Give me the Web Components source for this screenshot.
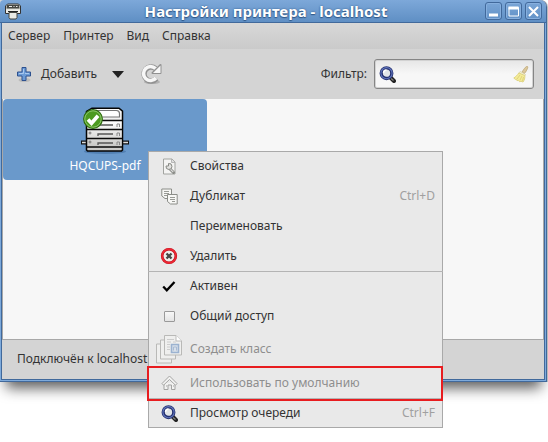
<!DOCTYPE html>
<html lang="ru">
<head>
<meta charset="utf-8">
<title>Настройки принтера - localhost</title>
<style>
  body { margin: 0; min-height: 100vh; background: #fff; font: 12px/16px "Noto Sans", sans-serif; color: #333; overflow: hidden; position: relative; }
  app-window { height: calc(100vh - 60px); margin-right: 1px; }
  context-menu { position: absolute; left: 148px; top: 151px; }
</style>
</head>
<body>
<app-window>
  <title-bar slot="title">Настройки принтера - localhost</title-bar>
  <menu-strip slot="menu"></menu-strip>
  <tool-strip slot="tools"></tool-strip>
  <printer-tile>HQCUPS-pdf</printer-tile>
  <span slot="status">Подключён к localhost</span>
</app-window>
<context-menu>
  <menu-entry icon="props">Свойства</menu-entry>
  <menu-entry icon="copy" accel="Ctrl+D">Дубликат</menu-entry>
  <menu-entry>Переименовать</menu-entry>
  <menu-entry icon="remove">Удалить</menu-entry>
  <menu-check ruled checked>Активен</menu-check>
  <menu-check>Общий доступ</menu-check>
  <menu-entry class="tall" icon="group" disabled>Создать класс</menu-entry>
  <menu-entry class="marked" icon="home" disabled>Использовать по умолчанию</menu-entry>
  <menu-entry ruled icon="find" accel="Ctrl+F">Просмотр очереди</menu-entry>
</context-menu>
<script>
const icons = {
  printer: [18, 17, `<path d="M1.500 3l2-2h11l2 2v7.500h-15z" fill="#d6d7cf" stroke="#333"/><path d="M3 2h12l.5 3.500h-13z" fill="#454743"/><path d="M5 3.500h3M9.500 3.500h1M12 3.500h1.500" stroke="#eee"/><path d="M2 6.500h14v3.500H2z" fill="#efefea"/><path d="M4 8.500h10" stroke="#222"/><path d="M5 9.500h8v5l-1 1.500H6l-1-1.500z" fill="#e9eae5" stroke="#454743"/>`],
  plus: [16, 17, `<ellipse cx="8.500" cy="14" rx="6" ry="2" fill="#aaa" opacity=".6"/><path d="M6 1.500h4v4.500h4.500v4H10v4.500H6V10H1.500V6H6z" fill="#6c9bd6" stroke="#2d518f" stroke-linejoin="round"/><path d="M7.500 3v4.500H3M9 7.500h4" stroke="#a8c8ef" fill="none"/>`],
  refresh: [22, 22, `<ellipse cx="11" cy="19" rx="8" ry="2" fill="#999" opacity=".6"/><path d="M14.500 5.600A7 7 0 1 0 15.400 15.500" fill="none" stroke="#919191" stroke-width="5.400"/><path d="M19.500 2v8h-8z" fill="#919191" stroke="#919191" stroke-width="2" stroke-linejoin="round"/><path d="M14.500 5.600A7 7 0 1 0 14.900 15" fill="none" stroke="#f7f7f7" stroke-width="3.600"/><path d="M19.500 2.500v7.500h-7.500z" fill="#f7f7f7"/>`],
  find: [17, 17, `<path d="M11 11l4 4" stroke="#222" stroke-width="4" stroke-linecap="round"/><path d="M12 12.500l2.500 2" stroke="#888" stroke-width="1.200"/><circle cx="7.500" cy="7.200" r="5.300" fill="#e2e5e8" stroke="#24306f" stroke-width="3.300"/><circle cx="7.500" cy="7.200" r="5.600" fill="none" stroke="#6276bd" stroke-width="1.100"/><path d="M4.500 7a3 3 0 0 1 3-3" fill="none" stroke="#fff" stroke-width="1.500"/>`],
  broom: [16, 17, `<path d="M14.500.5c-1-.7-3 1.500-5.500 5.500l2.500 1.500c3-4 3.700-6.300 3-7z" fill="#dcc89b" stroke="#bda779" stroke-width=".8"/><path d="M7 5.500l5.500 3-.8 1.500-5.700-3z" fill="#f6f4df" stroke="#d5cf9e" stroke-width=".7"/><path d="M5.800 7C4.500 9 2.500 11 .8 12l1.700 1.500 1-.3.500 1.500 1.500-.5 1 1.500 1.500-.5 2 .8c1.500-2 2-4 1.800-6.500z" fill="#f5ec98" stroke="#dfd483"/><path d="M7 9l-3 4M9 10l-2 4M10.500 11l-1 4" stroke="#d8cb71" stroke-width=".8"/>`],
  props: [16, 17, `<path d="M2.500 1h8.500l3 3v12H2.500z" fill="#f4f4f3" stroke="#a2a4a0"/><path d="M10.500 1v3.500H14" fill="#ddd" stroke="#aaa" stroke-width=".8"/><path d="M8.300 10.300l4.200 4.200" stroke="#888a85" stroke-width="3" stroke-linecap="round"/><path d="M8.600 10.500l3.700 3.700" stroke="#ddd" stroke-width="1.200"/><path d="M7.500 5.500v2.500h-2.500a3 3 0 1 0 2.500-2.500z" fill="#e2e2e0" stroke="#888a85"/>`],
  copy: [17, 17, `<g fill="#f7f7f5" stroke="#8b8d88"><path d="M.8 1h9.700v9.500H4L.8 8z"/><path d="M6.500 6.500h9.700V16H9.500l-3-2.500z"/></g><path d="M3 3.500h5M3 5.500h5M3 7.500h3M9 9.500h5M9 11.500h5M11 13.500h3" stroke="#999b96"/>`],
  remove: [18, 18, `<circle cx="9" cy="9" r="6.800" fill="#eeeeec" stroke="#b80d18" stroke-width="2.600"/><circle cx="9" cy="9" r="6.900" fill="none" stroke="#ed2734" stroke-width="1.600"/><path d="M6.500 6.500l5 5m0-5l-5 5" stroke="#454745" stroke-width="2.300"/>`],
  tick: [14, 12, `<path d="M1.200 6.500l3.600 3.800L12.500 2" fill="none" stroke="#000" stroke-width="2.300"/>`],
  group: [26, 30, `<g fill="#efefee" stroke="#b9b9b7"><path d="M.5 10h15v19h-15z"/><path d="M4.500 6h15v19h-15z"/><path d="M8.500 1.500H20L25.500 7v14h-17z"/></g><path d="M20 1.500V7h5.500" fill="#fff" stroke="#bbb"/><path d="M11 5.500h7M11 8h4M17 8h3M11 10.500h3M11 13h3M11 15.500h3" stroke="#ccc"/><path d="M15.500 10.500h7v8h-7z" fill="#d8e0ea" stroke="#9bb2d0" stroke-width="1.600"/><path d="M17.500 16.500v-3.500h3v3.500" fill="none" stroke="#a9bbd3"/>`],
  home: [17, 16, `<path d="M3 8v6.500h4V10h3.500v4.500h3.500V8" fill="#f2f2f1" stroke="#a4a4a3"/><path d="M8.500 1L1 8.500l1.500 1.700 6-5.700 6 5.700L16 8.500z" fill="#f3f3f2" stroke="#a4a4a3" stroke-linejoin="round"/><path d="M5 11h1M12 11h1" stroke="#a4a4a3"/>`],
  server: [50, 48, `<defs><linearGradient id="m" x2="0" y2="1"><stop stop-color="#fff"/><stop offset="1" stop-color="#c9c9c7"/></linearGradient></defs><ellipse cx="25" cy="44.500" rx="21" ry="2.500" fill="#234f83" opacity=".35"/><path d="M1 35.500h48" stroke="#111" stroke-width="4"/><path d="M2 35.500h46" stroke="#ddd" stroke-width="1.500"/><path d="M12 1.200h27l3.500 3V43l-1 1H7.500l-1-1V4.500z" fill="url(#m)" stroke="#050505" stroke-width="1.500"/><path d="M10 3.500h26.500q3 .3 3 3v3.500H14" fill="#fff" stroke="#777" stroke-width="1.200"/><path d="M8 14h33.500v8H8zM8 23h33.500v8H8zM8 32h33.500v7H8z" fill="url(#m)"/><path d="M6.500 13.500h36M6.500 22.500h36M6.500 31.500h36M6.500 40h36" stroke="#090909" stroke-width="1.500"/><path d="M18 20v-2h15M18 29v-2h15M18 38v-2h15" fill="none" stroke="#555" stroke-width="1.300"/><path d="M37 20v-3h2.500v3M37 29v-3h2.500v3M37 38v-3h2.500v3" fill="none" stroke="#888"/><circle cx="10" cy="26" r="1" fill="none" stroke="#777"/><circle cx="10" cy="35" r="1" fill="none" stroke="#777"/><circle cx="13" cy="12" r="9.300" fill="#4c9a20" stroke="#2b6a0c" stroke-width="1.200"/><circle cx="13" cy="12" r="8.200" fill="none" stroke="#90c96e"/><path d="M8 12.500l3.500 3.700 6.500-7.500" fill="none" stroke="#fff" stroke-width="3.700"/>`]
};
const svg = n => icons[n] ? `<svg aria-hidden="true" width="${icons[n][0]}" height="${icons[n][1]}" viewBox="0 0 ${icons[n][0]} ${icons[n][1]}">${icons[n][2]}</svg>` : "";
const reset = `*{box-sizing:border-box} svg{display:block;flex:none} button,input{font:inherit;color:inherit;margin:0;padding:0;border:0;background:none;outline:0} button{display:flex;align-items:center;text-align:left;white-space:nowrap}`;
const define = (name, render) => customElements.define(name, class extends HTMLElement {
  connectedCallback() {
    if (!this.shadowRoot) this.attachShadow({ mode: "open" }).innerHTML = `<style>${reset}</style>` + render(this);
  }
});

define("app-window", () => `<style>
  :host{box-sizing:border-box;display:flex;flex-direction:column;background:#d4d4d4;border:solid #41699b;border-width:0 1px 1px 0;border-radius:0 7px 0 0;box-shadow:1px 0 0 #bbb,0 12px 14px -6px rgba(0,0,0,.65)}
  .frame{flex:1;display:flex;flex-direction:column;min-height:0;border:solid #7eaadb;border-width:0 1px 1px}
  .inner{flex:1;display:flex;flex-direction:column;min-height:0;border:solid #41699b;border-width:0 1px 1px}
  main{flex:1;min-height:0;background:#f7f7f7;border:solid #a8a8a8;border-width:0 1px 1px}
  footer{padding:11px 15px 12px}
  </style><slot name="title"></slot><div class="frame"><div class="inner"><slot name="menu"></slot><slot name="tools"></slot><main><slot></slot></main><footer><slot name="status"></slot></footer></div></div>`);

define("title-bar", () => `<style>
  :host{box-sizing:border-box;display:grid;grid-template-columns:50px 1fr 64px;align-items:center;height:23px;padding:0 4px;background:linear-gradient(#7da8d9,#5f8fc4);border-bottom:1px solid #41699b;border-radius:4px 6px 0 0}
  h1{margin:0;font:bold 15px/20px "Noto Sans",sans-serif;color:#fff;text-align:center;white-space:nowrap;text-shadow:0 0 2px #2f5787,0 1px 1px #2f5787}
  .b{display:flex;gap:3px;justify-content:flex-end}
  button{width:17px;height:18px;border:1px solid #41699b;border-radius:3px;justify-content:center;box-shadow:inset 0 0 0 1px #86afde}
  </style>${svg("printer")}<h1><slot></slot></h1><div class="b">
  <button aria-label="Свернуть"><svg width="11" height="11"><path d="M1 9h9" stroke="#fff" stroke-width="3"/></svg></button>
  <button aria-label="Развернуть"><svg width="11" height="11"><path d="M1 1.500h9.500v8.500H1z" fill="none" stroke="#fff"/><path d="M.5 2h10" stroke="#fff" stroke-width="3"/></svg></button>
  <button aria-label="Закрыть"><svg width="11" height="11"><path d="M1 1l9 9m0-9l-9 9" stroke="#fff" stroke-width="2"/></svg></button></div>`);

define("menu-strip", () => `<style>:host{display:block;background:linear-gradient(#d8d8d8,#cacaca)} nav{display:flex;gap:13px;height:26px;padding:0 6px}</style>
  <nav>${["Сервер", "Принтер", "Вид", "Справка"].map(t => `<button>${t}</button>`).join("")}</nav>`);

define("tool-strip", () => `<style>
  :host{display:flex;align-items:center;height:50px;padding:0 10px 0 14px}
  .add{gap:9px} .more{margin-left:15px} .re{margin-left:17px}
  label{margin-left:auto;margin-right:7px}
  .field{display:flex;align-items:center;width:160px;height:30px;padding:0 4px;border:1px solid #858585;border-radius:3px;background:linear-gradient(#e6e6e6,#f7f7f7 50%);box-shadow:inset 0 0 0 1px #d2d2d2}
  input{flex:1;min-width:0}
  </style><button class="add">${svg("plus")}Добавить</button>
  <button class="more" aria-label="Ещё"><svg width="12" height="7"><path d="M0 0h12L6 7z" fill="#222"/></svg></button>
  <button class="re" aria-label="Обновить">${svg("refresh")}</button>
  <label for="f">Фильтр:</label><div class="field">${svg("find")}<input id="f" type="text"><button aria-label="Очистить">${svg("broom")}</button></div>`);

define("printer-tile", () => `<style>:host{display:block;width:204px} button{width:100%;flex-direction:column;padding:8px 0 6px;gap:3px;border-radius:4px;background:#6a99cb;color:#fff}</style><button>${svg("server")}<slot></slot></button>`);

define("context-menu", () => `<style>:host{display:block;width:295px;background:#e9e9e9;outline:1px solid #a9a9a9;outline-offset:-1px}</style><div role="menu"><slot></slot></div>`);

const row = `:host{display:block;position:relative;height:30px} :host([ruled]){box-shadow:inset 0 1px #b4b4b4}
  .row{display:flex;align-items:center;width:100%;height:100%;padding-right:8px}
  .icon{display:grid;place-items:center;width:42px;flex:none} .icon>*{grid-area:1/1}`;
define("menu-entry", el => `<style>${row}
  :host(.tall){height:36px} :host(.marked){height:31px}
  :host(.marked)::after{content:"";position:absolute;z-index:1;inset:-1px 0 -3px -1px;border:2px solid #e81c1f;pointer-events:none}
  :host([disabled]) button{color:#8e8e8e} kbd{margin-left:auto;font:inherit;color:#a0a0a0}
  </style><button class="row" role="menuitem"${el.hasAttribute("disabled") ? " disabled" : ""}><span class="icon">${svg(el.getAttribute("icon"))}</span><slot></slot>${el.hasAttribute("accel") ? `<kbd>${el.getAttribute("accel")}</kbd>` : ""}</button>`);

define("menu-check", el => `<style>${row}
  input{appearance:none;width:11px;height:11px;border:1px solid #999;border-radius:1px;background:linear-gradient(#f7f7f7,#e4e4e4)}
  input:checked{border-color:transparent;background:none} svg{pointer-events:none;visibility:hidden} input:checked+svg{visibility:visible}
  </style><label class="row"><span class="icon"><input type="checkbox"${el.hasAttribute("checked") ? " checked" : ""}>${svg("tick")}</span><slot></slot></label>`);
</script>
</body>
</html>
